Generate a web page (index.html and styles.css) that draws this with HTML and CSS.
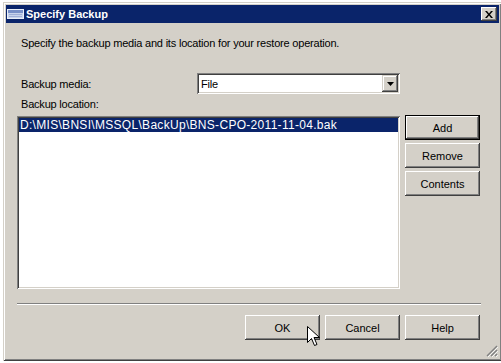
FILE: index.html
```html
<!DOCTYPE html>
<html lang="en">
<head>
    <meta charset="UTF-8">
    <title>Specify Backup</title>
    <link rel="stylesheet" href="styles.css">
</head>
<body>
    <div class="window">
        <div class="title-bar">
            <svg class="title-icon" width="17" height="10" viewBox="0 0 17 10">
                <rect x="0.5" y="0.5" width="16" height="9" fill="#c8d4ec" stroke="#e8eef8"/>
                <rect x="1" y="1" width="15" height="3" fill="#7890c8"/>
                <rect x="2" y="5" width="13" height="1" fill="#a0b0d8"/>
                <rect x="2" y="7" width="13" height="1" fill="#a0b0d8"/>
            </svg>
            <span class="title-text">Specify Backup</span>
            <button class="close-btn">
                <svg width="8" height="7" viewBox="0 0 8 7">
                    <path d="M0 0h2l2 2.5 2-2.5h2l-3 3.5 3 3.5h-2l-2-2.5-2 2.5h-2l3-3.5z" fill="#000"/>
                </svg>
            </button>
        </div>

        <div class="dialog-body">
            <p class="intro">Specify the backup media and its location for your restore operation.</p>

            <div class="media-row">
                <span class="label media-label">Backup media:</span>
                <div class="combo">
                    <span class="combo-value">File</span>
                    <span class="combo-arrow">
                        <svg width="7" height="4" viewBox="0 0 7 4"><path d="M0 0h7l-3.5 4z" fill="#000"/></svg>
                    </span>
                </div>
            </div>

            <div class="label location-label">Backup location:</div>

            <div class="list-row">
                <div class="listbox">
                    <div class="list-item selected">D:\MIS\BNSI\MSSQL\BackUp\BNS-CPO-2011-11-04.bak</div>
                </div>
                <div class="side-buttons">
                    <button class="btn default">Add</button>
                    <button class="btn">Remove</button>
                    <button class="btn">Contents</button>
                </div>
            </div>

            <div class="separator"></div>

            <div class="bottom-buttons">
                <button class="btn">OK</button>
                <button class="btn">Cancel</button>
                <button class="btn">Help</button>
            </div>

            <!-- poignee de redimensionnement -->
            <svg class="size-grip" width="12" height="12" viewBox="0 0 12 12">
                <path d="M11 1L1 11M11 5L5 11M11 9L9 11" stroke="#808080" stroke-width="1.4"/>
                <path d="M12 2L2 12M12 6L6 12M12 10L10 12" stroke="#fff" stroke-width="0.8"/>
            </svg>

            <!-- curseur de la souris -->
            <svg class="cursor" width="13" height="21" viewBox="0 0 13 21">
                <path d="M0.5 0.5v16l4-4 3 7 2.5-1-3-7h5.5z" fill="#fff" stroke="#000" stroke-width="1"/>
            </svg>
        </div>
    </div>
</body>
</html>
```

FILE: styles.css
```css
/* Fond et police de base */
body {
    margin: 0;
    background-color: #fff;
    font-family: "Liberation Sans", Arial, sans-serif;
    font-size: 11px;
    letter-spacing: -0.2px;
    color: #000;
    overflow: hidden;
}

/* Cadre de la fenetre */
.window {
    margin: 2px 0 0 3px;
    width: 499px;
    height: 359px;
    box-sizing: border-box;
    padding: 3px;
    background-color: #d4d0c8;
    box-shadow: inset 1px 1px #d4d0c8, inset -1px -1px #404040, inset 2px 2px #fff, inset -2px -2px #808080;
    display: flex;
    flex-direction: column;
}

/* Barre de titre */
.title-bar {
    height: 18px;
    background-color: #0a246a;
    display: flex;
    align-items: center;
    padding: 0 2px 0 1px;
}

.title-icon {
    margin-right: 2px;
}

.title-text {
    flex: 1;
    color: #fff;
    font-weight: bold;
    font-size: 11px;
    letter-spacing: 0;
}

.close-btn {
    width: 16px;
    height: 14px;
    padding: 0;
    border: none;
    background-color: #d4d0c8;
    box-shadow: inset -1px -1px #404040, inset 1px 1px #fff, inset -2px -2px #808080;
    display: flex;
    align-items: center;
    justify-content: center;
}

/* Contenu du dialogue */
.dialog-body {
    position: relative;
    flex: 1;
    padding: 13px 0 0 11px;
}

.intro {
    margin: 0 0 0 4px;
    line-height: 14px;
}

.label {
    line-height: 14px;
    padding-left: 4px;
}

.media-row {
    display: flex;
    align-items: center;
    margin-top: 23px;
}

.media-label {
    width: 176px;
}

/* Liste deroulante */
.combo {
    width: 203px;
    height: 21px;
    box-sizing: border-box;
    background-color: #fff;
    box-shadow: inset 1px 1px #808080, inset -1px -1px #fff, inset 2px 2px #404040, inset -2px -2px #d4d0c8;
    display: flex;
    align-items: center;
    padding: 2px;
}

.combo-value {
    flex: 1;
    padding-left: 2px;
}

.combo-arrow {
    width: 16px;
    height: 17px;
    background-color: #d4d0c8;
    box-shadow: inset -1px -1px #404040, inset 1px 1px #d4d0c8, inset -2px -2px #808080, inset 2px 2px #fff;
    display: flex;
    align-items: center;
    justify-content: center;
}

.location-label {
    margin-top: 3px;
}

.list-row {
    display: flex;
    margin-top: 5px;
}

/* Zone de liste */
.listbox {
    width: 383px;
    height: 173px;
    box-sizing: border-box;
    padding: 2px;
    background-color: #fff;
    box-shadow: inset 1px 1px #808080, inset -1px -1px #fff, inset 2px 2px #404040, inset -2px -2px #d4d0c8;
}

.list-item {
    height: 14px;
    line-height: 14px;
    padding-left: 1px;
    font-size: 12px;
    letter-spacing: 0.3px;
}

.list-item.selected {
    background-color: #0a246a;
    color: #fff;
}

.side-buttons {
    display: flex;
    flex-direction: column;
    gap: 3px;
    margin: -1px 0 0 5px;
}

/* Boutons */
.btn {
    width: 75px;
    height: 25px;
    padding: 0;
    border: none;
    font-family: "Liberation Sans", Arial, sans-serif;
    font-size: 11px;
    color: #000;
    background-color: #d4d0c8;
    box-shadow: inset -1px -1px #404040, inset 1px 1px #fff, inset -2px -2px #808080, inset 2px 2px #d4d0c8;
}

.btn.default {
    box-shadow: inset 0 0 0 1px #000, inset -2px -2px #404040, inset 2px 2px #fff, inset -3px -3px #808080;
}

.separator {
    width: 464px;
    height: 0;
    margin-top: 14px;
    border-top: 1px solid #808080;
    border-bottom: 1px solid #fff;
}

.bottom-buttons {
    display: flex;
    gap: 5px;
    margin: 10px 0 0 228px;
}

.size-grip {
    position: absolute;
    right: 1px;
    bottom: 1px;
}

.cursor {
    position: absolute;
    left: 301px;
    top: 303px;
}
```
